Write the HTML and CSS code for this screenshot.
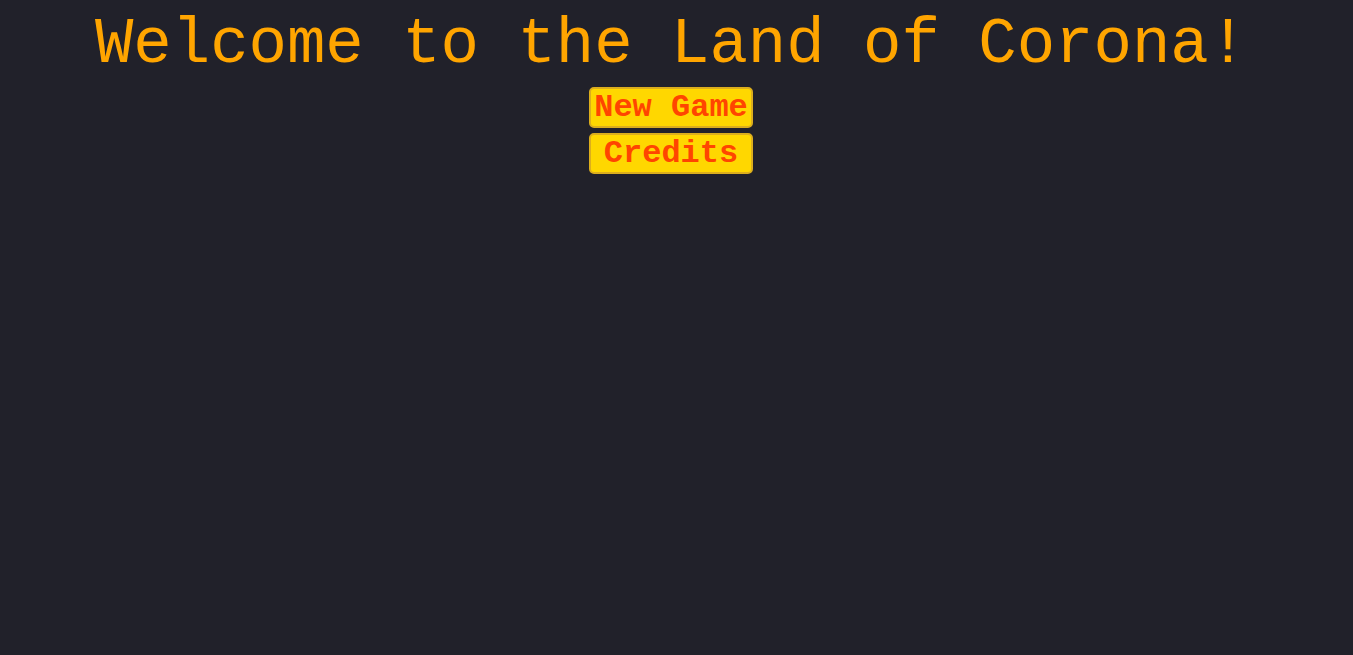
FILE: index.html
```html
<!DOCTYPE html>
<html>
<head>
<meta charset="utf-8">
<link rel="stylesheet" href="styles.css">
</head>
<body>
<main class="menu">
  <h1 class="title">Welcome to the Land of Corona!</h1>
  <nav class="buttons">
    <button class="btn">New Game</button>
    <button class="btn">Credits</button>
  </nav>
</main>
</body>
</html>
```
FILE: styles.css
```css
html, body {
  margin: 0;
  padding: 0;
  background: #21212a;
  height: 100%;
}
body {
  padding: 9px 11px 0 0;
  box-sizing: border-box;
}
.menu {
  display: flex;
  flex-direction: column;
  align-items: center;
  font-family: "Liberation Mono", "Courier New", monospace;
}
.title {
  margin: 0;
  font-size: 64px;
  font-weight: normal;
  color: #ffa500;
  line-height: normal;
}
.buttons {
  margin-top: 6px;
  display: grid;
  row-gap: 5px;
}
.btn {
  font-family: "Liberation Mono", "Courier New", monospace;
  font-size: 32px;
  font-weight: bold;
  color: #ff4500;
  background: #ffd700;
  border: 2px solid #dcae1d;
  border-radius: 5px;
  padding: 0 3px;
  line-height: normal;
  cursor: pointer;
}
```
